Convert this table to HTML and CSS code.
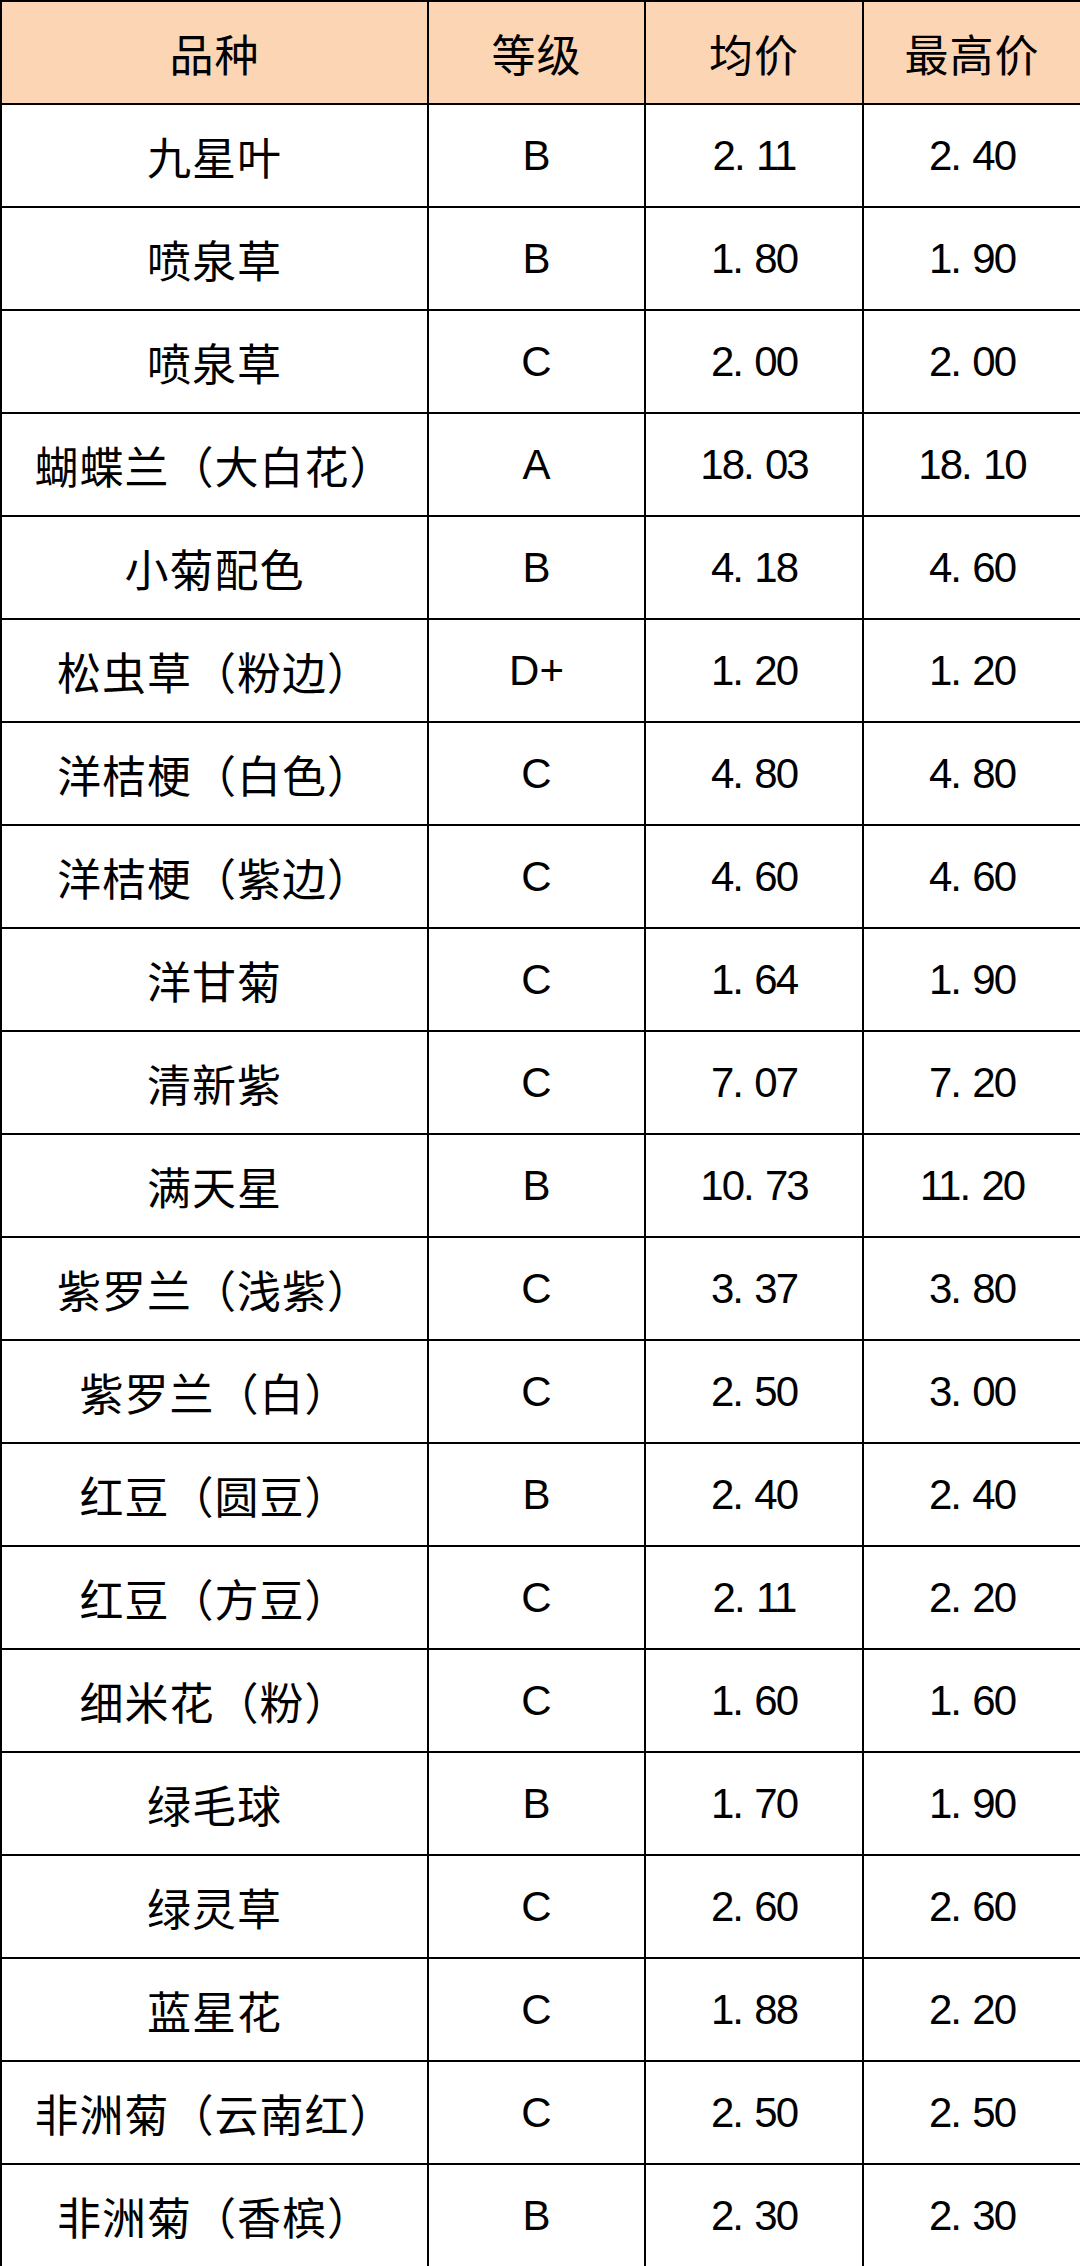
FILE: index.html
```html
<!DOCTYPE html>
<html lang="zh-CN">
<head>
<meta charset="utf-8">
<title>价格表</title>
<link rel="stylesheet" href="styles.css">
</head>
<body>
<table class="price-table">
  <colgroup>
    <col class="c-name">
    <col class="c-grade">
    <col class="c-avg">
    <col class="c-max">
  </colgroup>
  <thead>
    <tr><th>品种</th><th>等级</th><th>均价</th><th>最高价</th></tr>
  </thead>
  <tbody>
    <tr><td>九星叶</td><td class="lat">B</td><td class="num">2<span class="dot">.</span>11</td><td class="num">2<span class="dot">.</span>40</td></tr>
    <tr><td>喷泉草</td><td class="lat">B</td><td class="num">1<span class="dot">.</span>80</td><td class="num">1<span class="dot">.</span>90</td></tr>
    <tr><td>喷泉草</td><td class="lat">C</td><td class="num">2<span class="dot">.</span>00</td><td class="num">2<span class="dot">.</span>00</td></tr>
    <tr><td>蝴蝶兰（大白花）</td><td class="lat">A</td><td class="num">18<span class="dot">.</span>03</td><td class="num">18<span class="dot">.</span>10</td></tr>
    <tr><td>小菊配色</td><td class="lat">B</td><td class="num">4<span class="dot">.</span>18</td><td class="num">4<span class="dot">.</span>60</td></tr>
    <tr><td>松虫草（粉边）</td><td class="lat">D+</td><td class="num">1<span class="dot">.</span>20</td><td class="num">1<span class="dot">.</span>20</td></tr>
    <tr><td>洋桔梗（白色）</td><td class="lat">C</td><td class="num">4<span class="dot">.</span>80</td><td class="num">4<span class="dot">.</span>80</td></tr>
    <tr><td>洋桔梗（紫边）</td><td class="lat">C</td><td class="num">4<span class="dot">.</span>60</td><td class="num">4<span class="dot">.</span>60</td></tr>
    <tr><td>洋甘菊</td><td class="lat">C</td><td class="num">1<span class="dot">.</span>64</td><td class="num">1<span class="dot">.</span>90</td></tr>
    <tr><td>清新紫</td><td class="lat">C</td><td class="num">7<span class="dot">.</span>07</td><td class="num">7<span class="dot">.</span>20</td></tr>
    <tr><td>满天星</td><td class="lat">B</td><td class="num">10<span class="dot">.</span>73</td><td class="num">11<span class="dot">.</span>20</td></tr>
    <tr><td>紫罗兰（浅紫）</td><td class="lat">C</td><td class="num">3<span class="dot">.</span>37</td><td class="num">3<span class="dot">.</span>80</td></tr>
    <tr><td>紫罗兰（白）</td><td class="lat">C</td><td class="num">2<span class="dot">.</span>50</td><td class="num">3<span class="dot">.</span>00</td></tr>
    <tr><td>红豆（圆豆）</td><td class="lat">B</td><td class="num">2<span class="dot">.</span>40</td><td class="num">2<span class="dot">.</span>40</td></tr>
    <tr><td>红豆（方豆）</td><td class="lat">C</td><td class="num">2<span class="dot">.</span>11</td><td class="num">2<span class="dot">.</span>20</td></tr>
    <tr><td>细米花（粉）</td><td class="lat">C</td><td class="num">1<span class="dot">.</span>60</td><td class="num">1<span class="dot">.</span>60</td></tr>
    <tr><td>绿毛球</td><td class="lat">B</td><td class="num">1<span class="dot">.</span>70</td><td class="num">1<span class="dot">.</span>90</td></tr>
    <tr><td>绿灵草</td><td class="lat">C</td><td class="num">2<span class="dot">.</span>60</td><td class="num">2<span class="dot">.</span>60</td></tr>
    <tr><td>蓝星花</td><td class="lat">C</td><td class="num">1<span class="dot">.</span>88</td><td class="num">2<span class="dot">.</span>20</td></tr>
    <tr><td>非洲菊（云南红）</td><td class="lat">C</td><td class="num">2<span class="dot">.</span>50</td><td class="num">2<span class="dot">.</span>50</td></tr>
    <tr><td>非洲菊（香槟）</td><td class="lat">B</td><td class="num">2<span class="dot">.</span>30</td><td class="num">2<span class="dot">.</span>30</td></tr>
  </tbody>
</table>
</body>
</html>
```

FILE: styles.css
```css
html, body {
  margin: 0;
  padding: 0;
  background: #ffffff;
}

body {
  width: 1080px;
  font-family: "Noto Sans CJK SC", "Liberation Sans", sans-serif;
  color: #000000;
}

.price-table {
  width: 1080px;
  table-layout: fixed;
  border-collapse: collapse;
  border: 2px solid #000000;
}

.c-name { width: 427px; }
.c-grade { width: 217px; }
.c-avg { width: 218px; }
.c-max { width: 218px; }

.price-table tr {
  height: 103px;
}

.price-table th,
.price-table td {
  border: 2px solid #000000;
  padding: 0;
  text-align: center;
  vertical-align: middle;
  font-size: 44px;
  font-weight: 400;
  line-height: 1;
  letter-spacing: 1px;
  white-space: nowrap;
}

.price-table th {
  background: #fcd5b4;
}

.price-table td.lat,
.price-table td.num {
  font-family: "Liberation Sans", "Noto Sans CJK SC", sans-serif;
  font-size: 42px;
  letter-spacing: 0;
}

.price-table td.num {
  letter-spacing: -2px;
}

.dot {
  display: inline-block;
  width: 22px;
  text-align: left;
}
```
